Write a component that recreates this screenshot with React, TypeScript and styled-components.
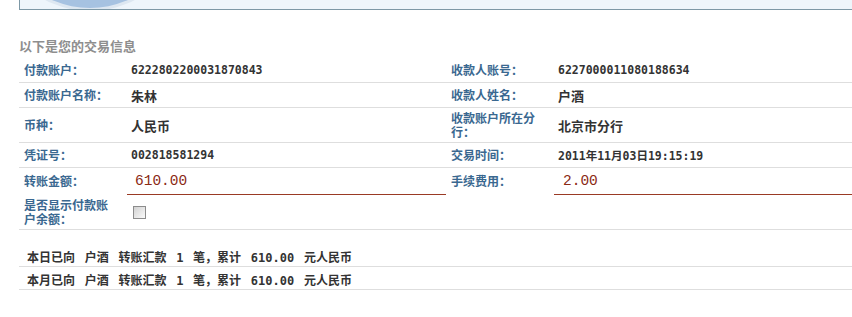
import React from "react";
import styled, { createGlobalStyle } from "styled-components";

const GlobalStyle = createGlobalStyle`
  html, body {
    margin: 0;
    padding: 0;
    background: #ffffff;
  }
  body {
    font-family: "Noto Sans CJK SC", sans-serif;
    font-size: 12px;
  }
`;

const Page = styled.div`
  width: 852px;
  height: 317px;
  overflow: hidden;
  padding-left: 19px;
  box-sizing: border-box;
`;

const Banner = styled.div`
  height: 9px;
  background: #eef5fb;
  border-left: 1px solid #7d98a6;
  border-bottom: 1px solid #7d98a6;
  overflow: hidden;
  line-height: 0;
`;

const Heading = styled.h3`
  margin: 28px 0 4px;
  font-size: 13px;
  line-height: 16px;
  font-weight: bold;
  color: #8e8e8e;
`;

const InfoGrid = styled.div`
  display: grid;
  grid-template-columns: 108px 319px 108px 1fr;
`;

type Line = "gray" | "red" | "none";

const Cell = styled.div<{ $h: number; $line?: Line }>`
  height: ${(p) => p.$h}px;
  box-sizing: border-box;
  display: flex;
  align-items: center;
  border-bottom: 1px solid
    ${(p) =>
      p.$line === "red" ? "#9a3a24" : p.$line === "none" ? "transparent" : "#dedede"};
`;

const Label = styled(Cell)`
  padding: 0 14px 0 5px;
  color: #3a6890;
  font-weight: bold;
  font-size: 12px;
  line-height: 14px;
`;

const Value = styled(Cell)<{ $pad?: number }>`
  padding-left: ${(p) => p.$pad ?? 4}px;
  color: #333333;
  font-weight: bold;
`;

const Num = styled.span`
  font-family: "DejaVu Sans Mono", "Noto Sans CJK SC", monospace;
  font-size: 11.5px;
`;

const Cjk = styled.span`
  font-family: "Noto Sans CJK SC", sans-serif;
  font-size: 13px;
`;

const Amount = styled.span`
  font-family: "Liberation Mono", monospace;
  font-size: 14.5px;
  font-weight: normal;
  color: #8b2a14;
`;

const Check = styled.input`
  appearance: none;
  margin: 0;
  width: 13px;
  height: 13px;
  box-sizing: border-box;
  border: 1px solid #8c8c8c;
  background: linear-gradient(135deg, #d2d2d2 0%, #e8e8e8 55%, #fafafa 100%);
`;

const Summary = styled.div`
  margin-top: 14px;
`;

const SummaryRow = styled.div`
  height: 23px;
  box-sizing: border-box;
  padding: 3px 0 0 8px;
  display: flex;
  align-items: center;
  border-bottom: 1px solid #dedede;
  font-family: "DejaVu Sans Mono", "Noto Sans CJK SC", monospace;
  font-size: 12px;
  font-weight: bold;
  color: #333333;
  word-spacing: 2.5px;
  white-space: pre;
`;

const BannerArt = () => (
  <svg width="200" height="9" viewBox="0 0 200 9">
    <circle cx="70" cy="-86" r="97" fill="#dde7f1" />
    <circle cx="70" cy="-86" r="94" fill="#a6c2e1" />
  </svg>
);

const summaries = [
  "本日已向 户酒 转账汇款 1 笔，累计 610.00 元人民币",
  "本月已向 户酒 转账汇款 1 笔，累计 610.00 元人民币",
];

export default function App() {
  return (
    <>
      <GlobalStyle />
      <Page>
        <Banner>
          <BannerArt />
        </Banner>
        <Heading>以下是您的交易信息</Heading>
        <InfoGrid>
          <Label $h={25}>付款账户：</Label>
          <Value $h={25}>
            <Num>6222802200031870843</Num>
          </Value>
          <Label $h={25}>收款人账号：</Label>
          <Value $h={25}>
            <Num>6227000011080188634</Num>
          </Value>

          <Label $h={25}>付款账户名称：</Label>
          <Value $h={25}>
            <Cjk>朱林</Cjk>
          </Value>
          <Label $h={25}>收款人姓名：</Label>
          <Value $h={25}>
            <Cjk>户酒</Cjk>
          </Value>

          <Label $h={35}>币种：</Label>
          <Value $h={35}>
            <Cjk>人民币</Cjk>
          </Value>
          <Label $h={35}>收款账户所在分行：</Label>
          <Value $h={35}>
            <Cjk>北京市分行</Cjk>
          </Value>

          <Label $h={25}>凭证号：</Label>
          <Value $h={25}>
            <Num>002818581294</Num>
          </Value>
          <Label $h={25}>交易时间：</Label>
          <Value $h={25}>
            <Num>2011年11月03日19:15:19</Num>
          </Value>

          <Label $h={27} $line="none">转账金额：</Label>
          <Value $h={27} $line="red" $pad={8}>
            <Amount>610.00</Amount>
          </Value>
          <Label $h={27} $line="none">手续费用：</Label>
          <Value $h={27} $line="red" $pad={9}>
            <Amount>2.00</Amount>
          </Value>

          <Label $h={35}>是否显示付款账户余额：</Label>
          <Value $h={35} $pad={6}>
            <Check type="checkbox" />
          </Value>
          <Value $h={35} />
          <Value $h={35} />
        </InfoGrid>
        <Summary>
          {summaries.map((s) => (
            <SummaryRow key={s}>{s}</SummaryRow>
          ))}
        </Summary>
      </Page>
    </>
  );
}
